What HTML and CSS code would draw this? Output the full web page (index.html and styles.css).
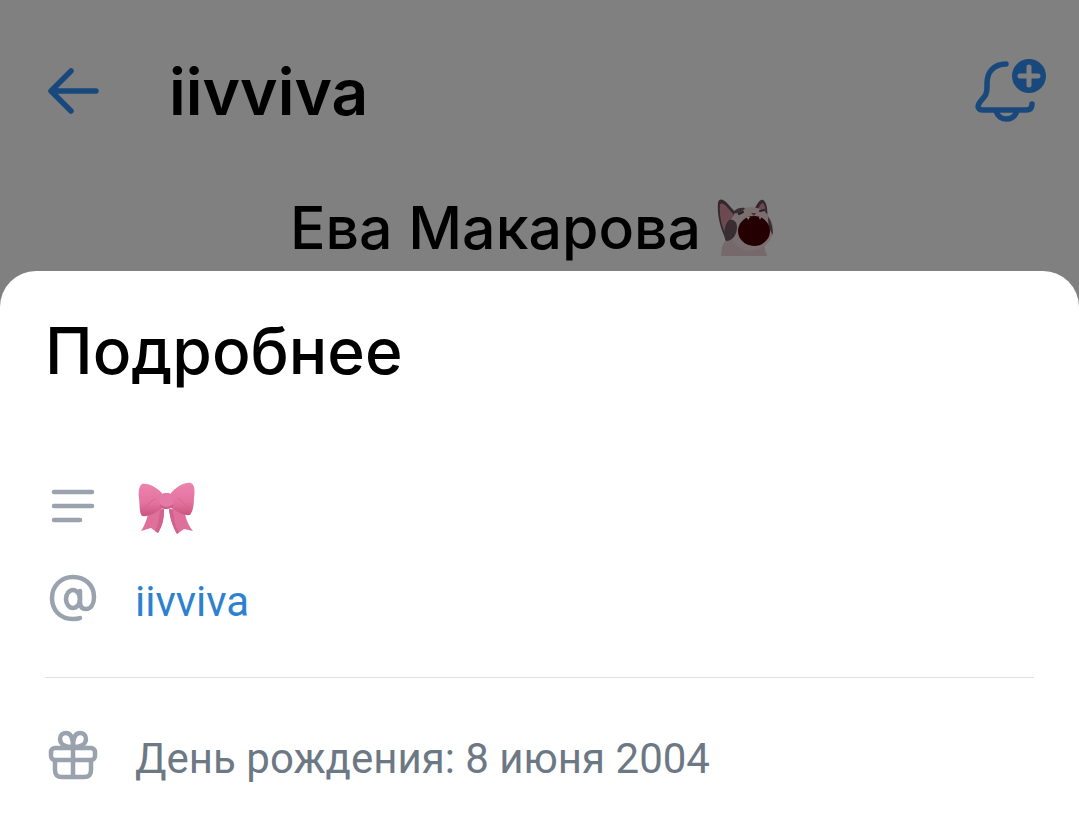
FILE: index.html
```html
<!DOCTYPE html>
<html lang="ru">
<head>
    <meta charset="UTF-8">
    <meta name="viewport" content="width=device-width, initial-scale=1.0">
    <title>iivviva</title>
    <link rel="stylesheet" href="styles.css">
</head>
<body>
    <header class="topbar">
        <button class="icon-btn" type="button" aria-label="Назад">
            <svg width="56" height="56" viewBox="0 0 56 56" fill="none" stroke="currentColor" stroke-width="5.5" stroke-linecap="round" stroke-linejoin="round">
                <path d="M26 8 6 28l20 20M6 28h45"/>
            </svg>
        </button>
        <h1 class="nick">iivviva</h1>
        <button class="icon-btn" type="button" aria-label="Уведомления">
            <svg width="72" height="66" viewBox="0 0 72 66" fill="none" stroke="currentColor" stroke-width="5.5" stroke-linecap="round" stroke-linejoin="round">
                <path d="M31 6C19 6 12 14 12 25v5c0 7-3 9-7 14-4 5-1 8 3 8h43c4 0 6-2 6-6"/>
                <path d="M21 53c2 6 5 8 10 8s9-2 11-8"/>
                <circle cx="54" cy="18" r="17" fill="currentColor" stroke="none"/>
                <path d="M54 9v18M45 18h18" stroke="#808080" stroke-width="5"/>
            </svg>
        </button>
    </header>

    <div class="profile">
        <h2 class="name">Ева Макарова</h2>
        <svg width="60" height="58" viewBox="0 0 60 58" role="img" aria-label="Кот">
            <path d="M11 36 5 48 4 57h46l-3-10 4-12z" fill="#75696a"/>
            <path d="M10 42C2 29 0 12 1 4c1-5 5-4 9 0l8 9z" fill="#33282c"/>
            <path d="M10 39C4 27 2 14 3 6c1-3 4-1 7 2l7 8z" fill="#6d4a52"/>
            <path d="M37 11C40 5 43 0 46 1c4 2 5 12 4 18z" fill="#33282c"/>
            <path d="M40 12c2-4 4-8 6-8 2 2 3 8 2 13z" fill="#6d4a52"/>
            <ellipse cx="34" cy="30" rx="22" ry="22" fill="#7a6f70"/>
            <path d="M12 21c-5 5-6 16-3 21 7 0 11-7 11-14 0-5-3-8-8-7zM17 12c3-3 8-4 11-3-2 4-7 6-12 5zM51 18c4 4 5 13 5 18-4-5-5-12-5-18z" fill="#382d31"/>
            <path d="M22 15l4-2M43 12l4-1" stroke="#291f24" stroke-width="2" stroke-linecap="round"/>
            <path d="M34 14h5l-2 3z" fill="#512d34"/>
            <ellipse cx="37" cy="32" rx="16" ry="15" fill="#240002"/>
            <path d="M30 18l1 3 2-3M42 18l1 3 1-3" fill="#918687"/>
        </svg>
    </div>

    <main class="sheet">
        <h2 class="title">Подробнее</h2>

        <div class="row">
            <svg class="row-icon" width="56" height="56" viewBox="0 0 56 56" fill="none" stroke="currentColor" stroke-width="4.5" stroke-linecap="round">
                <path d="M9 13h38M9 27h38M9 41h26"/>
            </svg>
            <svg width="64" height="60" viewBox="0 0 64 60" role="img" aria-label="Бант">
                <defs>
                    <linearGradient id="loop" x1="0" y1="0" x2="0" y2="1">
                        <stop offset="0" stop-color="#ec83ae"/>
                        <stop offset="0.6" stop-color="#e4729f"/>
                        <stop offset="1" stop-color="#c9557f"/>
                    </linearGradient>
                </defs>
                <path d="M14 31C13 40 10 48 6 54l10-3 7 5c5-8 6-16 6-24z" fill="#df709b"/>
                <path d="M49 31c1 9 4 17 9 23l-9-2-7 5c-5-9-7-17-8-25z" fill="#df709b"/>
                <path d="M25 34c-1 8-2 14-5 20l3 2c5-8 6-15 6-24zM34 32c1 9 3 16 8 25l2-2c-4-6-5-13-6-21z" fill="#d2618e"/>
                <path d="M27 16C20 9 12 6 7 7c-3 2-4 8-3 14 1 8 0 14 3 18 7 1 15-4 22-9z" fill="url(#loop)"/>
                <path d="M36 16c6-7 14-11 20-10 4 2 4 8 3 15 0 7-1 13-4 17-7 1-14-4-20-8z" fill="url(#loop)"/>
                <path d="M20 22c-6 3-10 8-13 13M43 21c5 4 9 8 12 12" fill="none" stroke="#d4648f" stroke-width="1" stroke-linecap="round"/>
                <rect x="25" y="16" width="13" height="15" rx="5" fill="#e47aa5"/>
                <path d="M25 27c0 4 2 5 6 5s7-1 7-5c-3 3-9 4-13 0z" fill="#cf5c88"/>
            </svg>
        </div>

        <div class="row">
            <svg class="row-icon" width="56" height="56" viewBox="0 0 56 56" fill="none" stroke="currentColor" stroke-width="4.5" stroke-linecap="round">
                <path d="M35 47c-2 1-5 1-7 1C15 48 7 39 7 27S16 6 28 6s21 8 21 20c0 7-3 12-8 12-4 0-6-2-6-7V20"/>
                <ellipse cx="28" cy="28" rx="7" ry="9"/>
            </svg>
            <a class="link" href="#">iivviva</a>
        </div>

        <hr class="divider">

        <div class="row">
            <svg class="row-icon" width="56" height="56" viewBox="0 0 56 56" fill="none" stroke="currentColor" stroke-width="4.5" stroke-linejoin="round">
                <rect x="6" y="20" width="44" height="12" rx="4"/>
                <path d="M10 32v10c0 5 2 7 7 7h22c5 0 7-2 7-7V32M28 19v30"/>
                <path d="M28 19c-8 0-13-3-13-8 0-4 3-6 6-6 5 0 7 5 7 14zM28 19c8 0 13-3 13-8 0-4-3-6-6-6-5 0-7 5-7 14z"/>
            </svg>
            <span class="text">День рождения: 8 июня 2004</span>
        </div>
    </main>
</body>
</html>
```

FILE: styles.css
```css
* {
    box-sizing: border-box;
}

body {
    margin: 0;
    min-height: 100vh;
    display: flex;
    flex-direction: column;
    background-color: #808080;
    color: #000;
    font-family: Roboto, sans-serif;
}

h1,
h2 {
    margin: 0;
    font-family: Inter, sans-serif;
    font-weight: 500;
}

svg {
    display: block;
    flex-shrink: 0;
}

.topbar {
    display: flex;
    align-items: center;
    height: 182px;
    padding: 0 32px 0 45px;
}

.icon-btn {
    padding: 0;
    border: none;
    background: none;
    color: #19487c;
    cursor: pointer;
}

.nick {
    flex: 1;
    margin-left: 68px;
    padding-top: 2px;
    font-size: 64px;
    font-weight: 600;
    line-height: 72px;
}

.profile {
    display: flex;
    justify-content: center;
    align-items: center;
    gap: 16px;
    height: 89px;
    padding: 2px 12px 0 0;
}

.name {
    font-size: 59px;
    line-height: 72px;
}

.sheet {
    flex: 1;
    padding: 38px 45px 24px;
    border-radius: 36px 36px 0 0;
    background-color: #fff;
}

.title {
    margin-bottom: 74px;
    font-size: 64px;
    line-height: 84px;
}

.row {
    display: flex;
    align-items: center;
    gap: 34px;
    min-height: 80px;
}

.row + .row {
    margin-top: 12px;
}

.row-icon {
    color: #99a2ad;
}

.link,
.text {
    padding-top: 6px;
    font-size: 42px;
    line-height: 56px;
}

.link {
    color: #2d81d0;
    text-decoration: none;
}

.text {
    color: #6d7885;
}

.divider {
    height: 1px;
    margin: 38px 0;
    border: none;
    background-color: #dcdee0;
}
```
